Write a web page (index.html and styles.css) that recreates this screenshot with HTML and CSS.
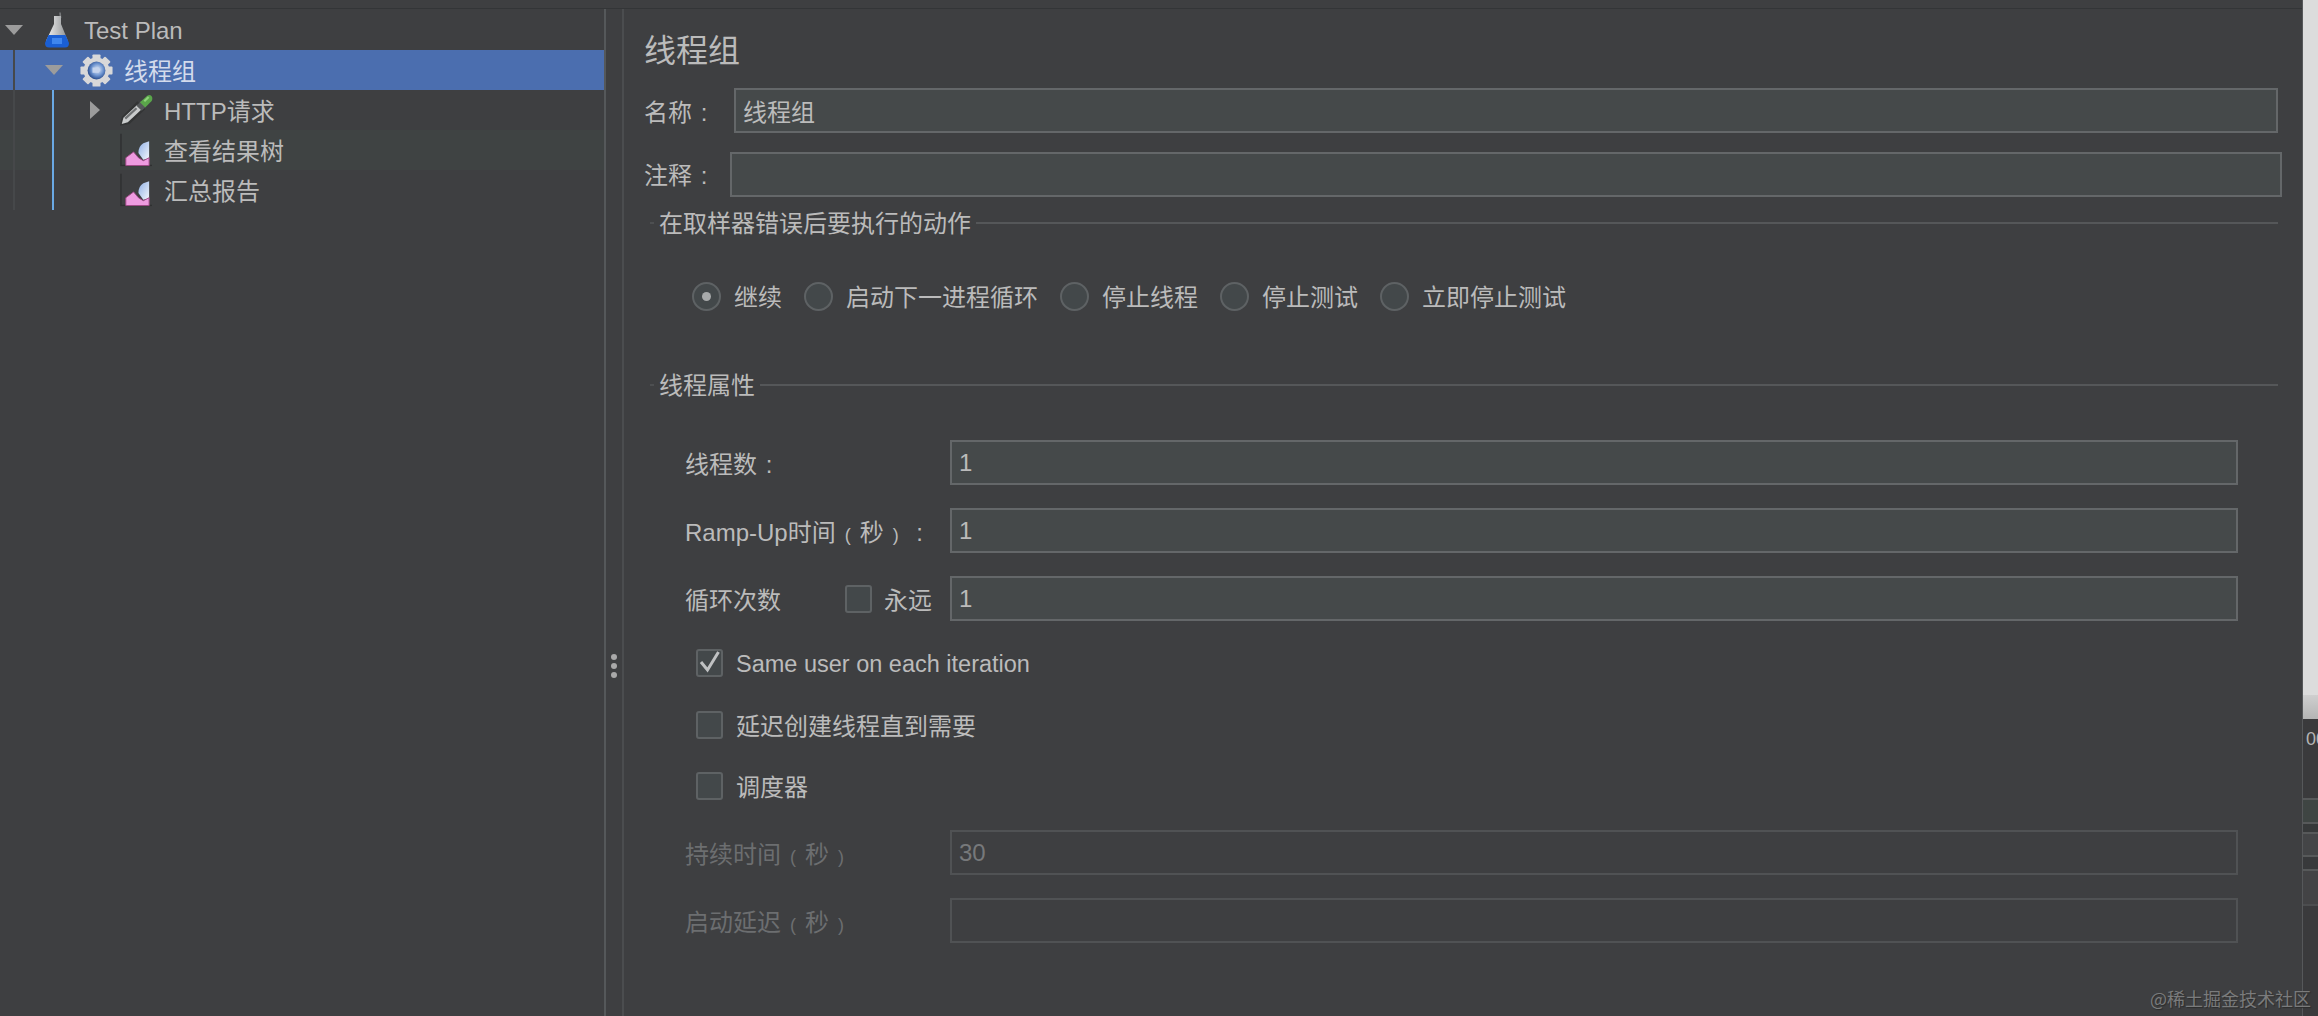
FILE: index.html
```html
<!DOCTYPE html>
<html lang="zh">
<head>
<meta charset="utf-8">
<title>线程组</title>
<link rel="stylesheet" href="styles.css">
</head>
<body>
<div class="app">
  <div class="workspace">
    <div class="topbar"></div>
    <div class="panes">
      <aside class="tree">
        <div class="guide guide-dark"></div>
        <div class="guide guide-blue"></div>
        <div class="row">
          <span class="arrow-slot"><i class="arrow-down"></i></span>
          <span class="icon-slot">
            <svg width="26" height="37" viewBox="0 0 26 37">
              <defs><linearGradient id="fl" x1="0" x2="1" y1="0" y2="0"><stop offset="0" stop-color="#f4f4f4"/><stop offset="1" stop-color="#8b8e90"/></linearGradient></defs>
              <path d="M16 0.5 L16.6 6" stroke="#77797b" stroke-width="1.6" fill="none"/>
              <path d="M10 4 H17 V12 L24 29 H2 L10 12 Z" fill="url(#fl)"/>
              <path d="M4.5 23 H21.5 L25 31 Q25 35.5 21 35.5 H5 Q1 35.5 1 31 Z" fill="#1a5fd4"/>
              <path d="M8 26 H18 V32 H8 Z" fill="#3f86ee"/>
            </svg>
          </span>
          <span class="label label-latin">Test Plan</span>
        </div>
        <div class="row row-d1 row-selected">
          <span class="arrow-slot"><i class="arrow-down"></i></span>
          <span class="icon-slot">
            <svg width="37" height="37" viewBox="0 0 37 37">
              <defs><radialGradient id="gc" cx="0.55" cy="0.45" r="0.6"><stop offset="0" stop-color="#e8eef8"/><stop offset="0.55" stop-color="#6d94d0"/><stop offset="1" stop-color="#1c3f80"/></radialGradient></defs>
              <g fill="#d8d8d9">
                <circle cx="18.5" cy="18.5" r="14.5"/>
                <rect x="14" y="0.5" width="9" height="36" rx="1"/>
                <rect x="14" y="0.5" width="9" height="36" rx="1" transform="rotate(45 18.5 18.5)"/>
                <rect x="14" y="0.5" width="9" height="36" rx="1" transform="rotate(90 18.5 18.5)"/>
                <rect x="14" y="0.5" width="9" height="36" rx="1" transform="rotate(135 18.5 18.5)"/>
              </g>
              <circle cx="18.5" cy="18.5" r="10" fill="url(#gc)"/>
              <path d="M14 15 H21 L23 18 L21 21 H14 Z" fill="#c4d3ec"/>
            </svg>
          </span>
          <span class="label label-cjk">线程组</span>
        </div>
        <div class="row row-d2">
          <span class="arrow-slot"><i class="arrow-right"></i></span>
          <span class="icon-slot">
            <svg width="38" height="36" viewBox="0 0 38 36">
              <path d="M0 36 L2 26 L20 8 L29 17 L11 34 Z" fill="#333435"/>
              <path d="M2 34 L4 27 L20 12 L25 17 L9 32 Z" fill="#c9cbcc"/>
              <path d="M6 28 L19 16" stroke="#6f7173" stroke-width="2.6"/>
              <path d="M19 13 L24 8 L30 14 L25 19 Z" fill="#56595b"/>
              <path d="M23 9 L31 2 Q35 -1 37 3 Q38 7 35 9 L29 15 Z" fill="#5aa64a"/>
              <path d="M28 8 L33 3" stroke="#8fd27a" stroke-width="2.4"/>
            </svg>
          </span>
          <span class="label label-cjk">HTTP请求</span>
        </div>
        <div class="row row-d2 row-tint">
          <span class="arrow-slot"></span>
          <span class="icon-slot">
            <svg class="chart" width="34" height="34" viewBox="0 0 34 34"><use href="#chart-icon"/></svg>
          </span>
          <span class="label label-cjk">查看结果树</span>
        </div>
        <div class="row row-d2">
          <span class="arrow-slot"></span>
          <span class="icon-slot">
            <svg class="chart" width="34" height="34" viewBox="0 0 34 34"><use href="#chart-icon"/></svg>
          </span>
          <span class="label label-cjk">汇总报告</span>
        </div>
      </aside>

      <div class="divider"><span class="dot"></span><span class="dot"></span><span class="dot"></span></div>

      <main class="form">
        <h1 class="title">线程组</h1>
        <div class="name-row">
          <span class="name-label">名称<span class="punct">:</span></span>
          <input class="field" value="线程组" readonly>
        </div>
        <div class="comment-row">
          <span class="comment-label">注释<span class="punct">:</span></span>
          <input class="field" value="" readonly>
        </div>

        <div class="legend legend-first"><i class="dash"></i><span class="legend-text">在取样器错误后要执行的动作</span><i class="rule"></i></div>
        <div class="radios">
          <span class="radio radio-on"></span><span class="radio-text">继续</span>
          <span class="radio"></span><span class="radio-text">启动下一进程循环</span>
          <span class="radio"></span><span class="radio-text">停止线程</span>
          <span class="radio"></span><span class="radio-text">停止测试</span>
          <span class="radio"></span><span class="radio-text">立即停止测试</span>
        </div>

        <div class="legend legend-second"><i class="dash"></i><span class="legend-text">线程属性</span><i class="rule"></i></div>

        <div class="prop prop-first">
          <span class="prop-label">线程数<span class="punct">:</span></span>
          <input class="field" value="1" readonly>
        </div>
        <div class="prop">
          <span class="prop-label">Ramp-Up时间<span class="punct paren">(</span>秒<span class="punct paren">)</span><span class="punct">:</span></span>
          <input class="field" value="1" readonly>
        </div>
        <div class="prop">
          <span class="prop-label prop-label-split">循环次数<span class="forever"><span class="check"></span><span>永远</span></span></span>
          <input class="field" value="1" readonly>
        </div>

        <div class="option option-first">
          <span class="check">
            <svg class="tick" width="23" height="24" viewBox="0 0 23 24"><path d="M3 11 L9.5 19 L20.5 1" fill="none" stroke="#bfc1c2" stroke-width="3"/></svg>
          </span>
          <span class="option-text option-latin">Same user on each iteration</span>
        </div>
        <div class="option option-second">
          <span class="check"></span><span class="option-text">延迟创建线程直到需要</span>
        </div>
        <div class="option option-third">
          <span class="check"></span><span class="option-text">调度器</span>
        </div>

        <div class="prop prop-disabled prop-after-options">
          <span class="prop-label">持续时间<span class="punct paren">(</span>秒<span class="punct paren">)</span></span>
          <input class="field" value="30" readonly>
        </div>
        <div class="prop prop-disabled">
          <span class="prop-label">启动延迟<span class="punct paren">(</span>秒<span class="punct paren">)</span></span>
          <input class="field" value="" readonly>
        </div>
      </main>
    </div>
  </div>

  <div class="edge">
    <div class="edge-light"></div>
    <div class="edge-shade"></div>
    <div class="edge-num">00</div>
    <div class="edge-band edge-a"></div>
    <div class="edge-band edge-b"></div>
    <div class="edge-band edge-c"></div>
    <div class="edge-band edge-d"></div>
    <div class="edge-band edge-e"></div>
  </div>
</div>

<div class="watermark">@稀土掘金技术社区</div>

<svg class="defs" width="0" height="0">
  <defs>
    <linearGradient id="dr" x1="0" x2="1" y1="0" y2="1"><stop offset="0" stop-color="#8fb0e6"/><stop offset="1" stop-color="#f2f6fc"/></linearGradient>
    <symbol id="chart-icon" viewBox="0 0 34 34">
      <path d="M1 0 V33 H33" stroke="#2f3031" stroke-width="1.5" fill="none"/>
      <path d="M19 20 Q19 13 24 10 L30 8 V26 L24 27 Z" fill="url(#dr)"/>
      <path d="M6 33 V25 L14 19 L19 25 L24 28 L30 25 V33 Z" fill="#ee9be0" stroke="#a04a88" stroke-width="1"/>
    </symbol>
  </defs>
</svg>
</body>
</html>
```
FILE: styles.css
```css
* { box-sizing: border-box; }
html, body { margin: 0; padding: 0; height: 100%; overflow: hidden; }
body {
  background: #3e3f41;
  color: #bbbbbb;
  font-family: "Liberation Sans", "Noto Sans CJK SC", sans-serif;
  font-size: 24px;
}
.app { display: flex; width: 2318px; height: 1016px; }
.workspace { display: flex; flex-direction: column; width: 2302px; height: 100%; }
.topbar { height: 9px; flex: none; border-bottom: 1px solid #333537; }
.panes { display: flex; flex: 1; min-height: 0; }

/* tree */
.tree { position: relative; width: 604px; flex: none; padding-top: 1px; }
.row { display: flex; align-items: center; height: 40px; }
.row-d1 { padding-left: 40px; }
.row-d2 { padding-left: 80px; }
.row-selected { background: #4b6eaf; color: #d3dbec; }
.row-tint { background: #3f4343; }
.arrow-slot { width: 40px; flex: none; padding-left: 5px; display: flex; align-items: center; }
.icon-slot { width: 44px; flex: none; display: flex; justify-content: center; align-items: center; padding-right: 11px; }
.label { font-size: 24px; white-space: nowrap; }
.label-latin { padding-top: 2px; }
.label-cjk { padding-bottom: 2px; }
.arrow-down {
  display: block; width: 0; height: 0;
  border-left: 9px solid transparent; border-right: 9px solid transparent;
  border-top: 10px solid #9c9c9c;
}
.arrow-right {
  display: block; width: 0; height: 0; margin-left: 5px;
  border-top: 9px solid transparent; border-bottom: 9px solid transparent;
  border-left: 10px solid #9c9c9c;
}
.guide { position: absolute; width: 2px; }
.guide-dark { left: 13px; top: 41px; height: 160px; background: #46484a; z-index: 1; }
.guide-blue { left: 52px; top: 81px; height: 120px; background: #6aa9e4; z-index: 1; }
.defs { position: absolute; }

/* divider */
.divider {
  width: 20px; flex: none;
  border-left: 2px solid #55585a; border-right: 2px solid #4b4d4f;
  display: flex; flex-direction: column; align-items: center; gap: 3px;
  padding-top: 645px;
}
.dot { width: 6px; height: 6px; border-radius: 50%; background: #a9a9a9; flex: none; }

/* form */
.form { flex: 1; min-width: 0; padding-top: 22px; }
.title { margin: 0; font-size: 32px; font-weight: 400; line-height: 40px; padding-left: 20px; }
.name-row, .comment-row { display: flex; align-items: center; height: 45px; padding-left: 20px; }
.name-row { margin-top: 17px; padding-right: 24px; }
.comment-row { margin-top: 19px; padding-right: 20px; }
.name-label { width: 90px; flex: none; }
.comment-label { width: 86px; flex: none; padding-bottom: 2px; }
.punct { display: inline-block; width: 24px; text-align: center; }
.paren { font-size: 18px; }
.field {
  flex: 1; min-width: 0; height: 45px;
  background: #45494a; border: 2px solid #646769; border-radius: 0;
  color: #bbbbbb; padding: 0 7px; outline: none;
  font: 24px "Liberation Sans", "Noto Sans CJK SC", sans-serif;
}

.legend { display: flex; align-items: center; height: 24px; padding-left: 26px; padding-right: 24px; }
.legend-first { margin-top: 14px; }
.legend-second { margin-top: 62px; }
.legend-text { padding-bottom: 4px; }
.dash { width: 4px; height: 2px; background: #4d4f51; flex: none; margin-right: 5px; }
.rule { flex: 1; height: 2px; background: #555759; margin-left: 5px; }

.radios { display: flex; align-items: center; height: 30px; margin-top: 46px; padding-left: 68px; }
.radio {
  width: 29px; height: 29px; flex: none; border-radius: 50%;
  background: #43484a; border: 2px solid #5e6264;
  display: flex; align-items: center; justify-content: center;
  margin-right: 13px;
}
.radio-on::after { content: ""; width: 9px; height: 9px; border-radius: 50%; background: #a8aaab; }
.radio-text { margin-right: 22px; white-space: nowrap; padding-bottom: 2px; }

.prop { display: flex; align-items: center; height: 45px; margin-top: 23px; padding-left: 61px; padding-right: 64px; }
.prop-first { margin-top: 43px; }
.prop-label { width: 265px; flex: none; white-space: nowrap; }
.prop-label-split { display: flex; align-items: center; }
.forever { display: flex; align-items: center; gap: 12px; margin-left: 64px; }
.prop-disabled .prop-label { color: #6c6e70; }
.prop-disabled .field { background: transparent; border-color: #505254; color: #77797b; }
.prop-after-options { margin-top: 30px; }

.option { display: flex; align-items: center; height: 28px; padding-left: 72px; }
.option-first { margin-top: 28px; }
.option-second { margin-top: 34px; }
.option-third { margin-top: 33px; }
.option-text { margin-left: 13px; white-space: nowrap; padding-bottom: 2px; }
.option-latin { font-size: 23.5px; padding-bottom: 0; padding-top: 2px; }
.check {
  width: 27px; height: 28px; flex: none;
  background: #43484a; border: 2px solid #5e6264; border-radius: 3px;
  display: flex; align-items: center; justify-content: center;
}

/* right window edge */
.edge { width: 16px; flex: none; height: 100%; display: flex; flex-direction: column; overflow: hidden; background: #3a3a3c; border-left: 1px solid #56585a; }
.edge-light { height: 695px; flex: none; background: #dcdcdc; }
.edge-shade { height: 24px; flex: none; background: linear-gradient(#cfcfcf, #b4b4b4); }
.edge-num { height: 40px; flex: none; padding-left: 3px; font-size: 18px; line-height: 40px; color: #b5b5b5; white-space: nowrap; }
.edge-band { flex: none; border-top: 2px solid #57595a; }
.edge-a { height: 24px; margin-top: 39px; background: #3f4543; }
.edge-b { height: 10px; background: #37393a; }
.edge-c { height: 23px; background: #444547; }
.edge-d { height: 14px; background: #38393b; }
.edge-e { height: 37px; background: #434345; border-bottom: 2px solid #4c4d4f; }

.watermark {
  position: absolute; left: 2150px; top: 985px;
  font-size: 18px; line-height: 26px; color: #7a7b7c; white-space: nowrap;
  text-shadow: 1px 1px 1px #2c2c2c;
  font-family: "Noto Sans CJK SC", sans-serif;
}
```
